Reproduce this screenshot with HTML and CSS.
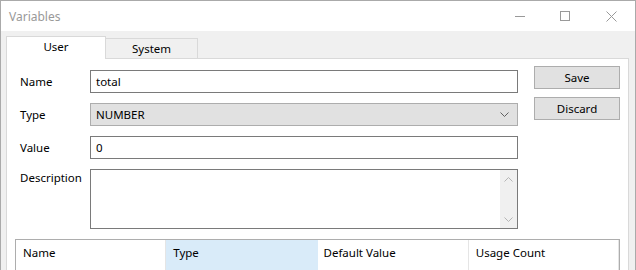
FILE: index.html
```html
<!DOCTYPE html>
<html lang="en">
<head>
    <meta charset="UTF-8">
    <title>Variables</title>
    <link rel="stylesheet" href="styles.css">
</head>
<body>

    <div class="window">

        <!-- title bar -->
        <div class="titlebar">
            <span class="title">Variables</span>
            <div class="controls">
                <svg width="46" height="30" viewBox="0 0 46 30"><line x1="18" y1="15.5" x2="28" y2="15.5" stroke="#999" stroke-width="1"/></svg>
                <svg width="46" height="30" viewBox="0 0 46 30"><rect x="17.5" y="10.5" width="9" height="9" fill="none" stroke="#999" stroke-width="1"/></svg>
                <svg width="46" height="30" viewBox="0 0 46 30"><path d="M17.5 10.5 L27.5 20.5 M27.5 10.5 L17.5 20.5" stroke="#999" stroke-width="1"/></svg>
            </div>
        </div>

        <div class="content">

            <!-- tabs -->
            <div class="tabs">
                <div class="tab active">User</div>
                <div class="tab">System</div>
            </div>

            <div class="panel">
                <div class="top">
                    <div class="form">
                        <label>Name</label>
                        <div class="field">total</div>

                        <label>Type</label>
                        <div class="field select">
                            NUMBER
                            <svg class="chev" width="9" height="5" viewBox="0 0 9 5"><path d="M0.5 0.5 L4.5 4.5 L8.5 0.5" fill="none" stroke="#606060" stroke-width="1"/></svg>
                        </div>

                        <label>Value</label>
                        <div class="field">0</div>

                        <label class="top_label">Description</label>
                        <div class="field area">
                            <div class="scroll">
                                <svg width="9" height="5" viewBox="0 0 9 5"><path d="M0.5 4.5 L4.5 0.5 L8.5 4.5" fill="none" stroke="#b5b5b5" stroke-width="1"/></svg>
                                <svg width="9" height="5" viewBox="0 0 9 5"><path d="M0.5 0.5 L4.5 4.5 L8.5 0.5" fill="none" stroke="#b5b5b5" stroke-width="1"/></svg>
                            </div>
                        </div>
                    </div>

                    <div class="buttons">
                        <button>Save</button>
                        <button>Discard</button>
                    </div>
                </div>

                <!-- variable list -->
                <div class="list">
                    <div class="head">
                        <div class="col">Name</div>
                        <div class="col hot">Type</div>
                        <div class="col wide">Default Value</div>
                        <div class="col">Usage Count</div>
                    </div>
                </div>
            </div>
        </div>
    </div>

</body>
</html>
```

FILE: styles.css
```css
body{
    margin: 0;
    font-family: "Noto Sans", "Liberation Sans", sans-serif;
    font-size: 11.5px;
    color: #000;
}

.window{
    width: 636px;
    height: 270px;
    box-sizing: border-box;
    border: 1px solid #aaaaaa;
    border-bottom: none;
    background-color: #f0f0f0;
    overflow: hidden;
}

.titlebar{
    height: 30px;
    background-color: #fff;
    display: flex;
    align-items: center;
    justify-content: space-between;
}

.title{
    padding-left: 8px;
    color: #999;
    font-size: 12px;
}

.controls{
    display: flex;
    align-self: flex-start;
    height: 30px;
}

.controls svg{
    display: block;
}

.content{
    padding: 5px 6px 0 5px;
}

.tabs{
    display: flex;
    align-items: flex-end;
    height: 22px;
}

.tab{
    box-sizing: border-box;
    height: 20px;
    width: 92px;
    border: 1px solid #d9d9d9;
    border-bottom: none;
    border-left: none;
    text-align: center;
    line-height: 20px;
}

.tab.active{
    height: 23px;
    width: 100px;
    margin-bottom: -1px;
    background-color: #fff;
    border-left: 1px solid #d9d9d9;
    line-height: 19px;
    position: relative;
}

.panel{
    background-color: #fff;
    border: 1px solid #d9d9d9;
    height: 220px;
    padding: 7px 7px 0 8px;
}

.top{
    display: flex;
    gap: 16px;
}

.form{
    margin-top: 4px;
    display: grid;
    grid-template-columns: 75px 428px;
    row-gap: 10px;
}

.form label{
    padding-left: 5px;
    align-self: center;
}

.form .top_label{
    align-self: start;
    padding-top: 1px;
}

.field{
    box-sizing: border-box;
    height: 23px;
    border: 1px solid #7a7a7a;
    padding: 0 5px;
    line-height: 21px;
}

.select{
    background-color: #e1e1e1;
    border-color: #adadad;
    display: flex;
    justify-content: space-between;
    align-items: center;
}

.chev{
    margin-right: 3px;
}

.area{
    height: 60px;
    padding: 0;
    display: flex;
    justify-content: flex-end;
}

.scroll{
    width: 17px;
    background-color: #f0f0f0;
    display: flex;
    flex-direction: column;
    justify-content: space-between;
    align-items: center;
    padding: 7px 0 6px;
}

.scroll svg{
    display: block;
}

.buttons{
    display: flex;
    flex-direction: column;
    gap: 8px;
}

button{
    width: 86px;
    height: 23px;
    background-color: #e1e1e1;
    border: 1px solid #adadad;
    font-family: inherit;
    font-size: 11.5px;
    padding: 0;
    color: #000;
}

.list{
    margin-top: 10px;
    width: 605px;
    height: 40px;
    box-sizing: border-box;
    border: 1px solid #adadad;
    border-bottom: none;
}

.head{
    display: flex;
    height: 30px;
}

.col{
    width: 151px;
    border-right: 1px solid #e5e5e5;
    padding-left: 7px;
    box-sizing: border-box;
    line-height: 26px;
}

.col.hot{
    width: 152px;
    background-color: #d9ebf9;
    border-right: none;
}

.col.wide{
    width: 152px;
    padding-left: 6px;
}
```
